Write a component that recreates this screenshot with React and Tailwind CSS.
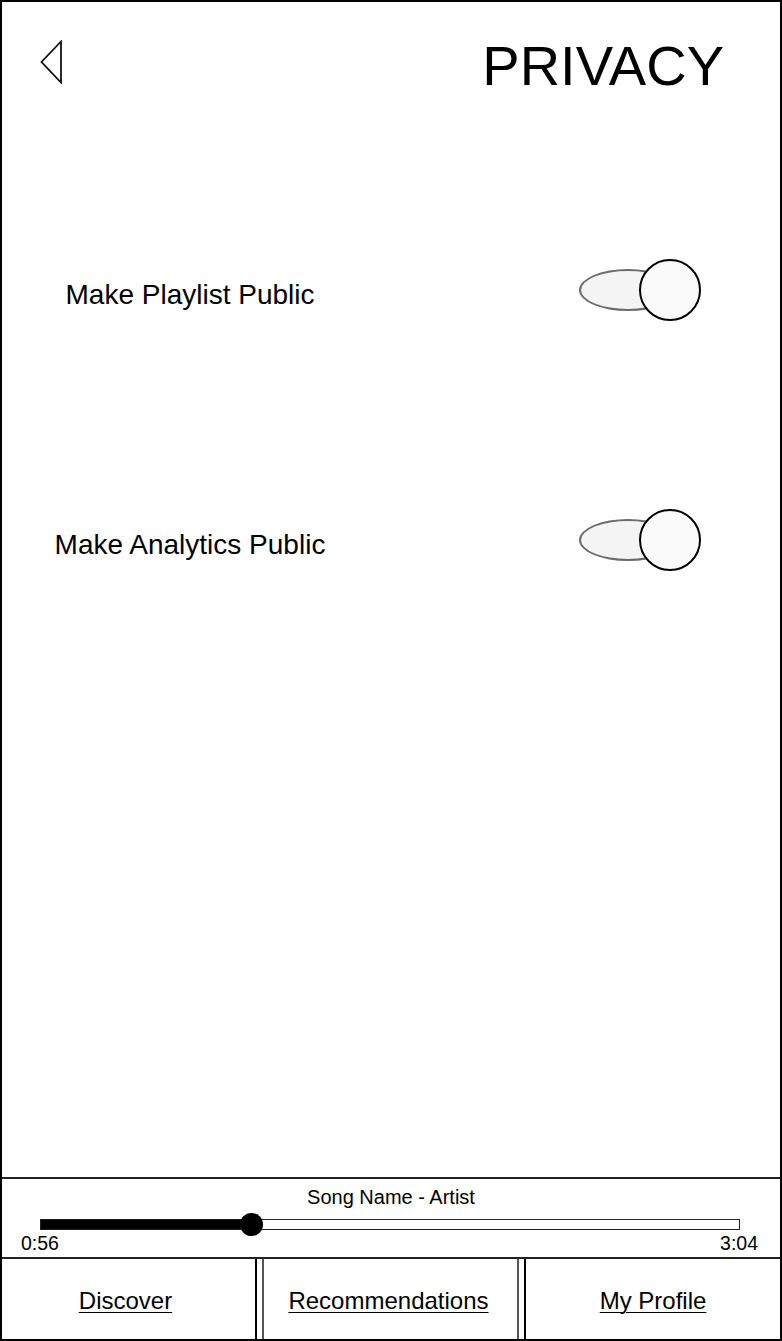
import { useState } from 'react'

function Toggle({ on, onChange }) {
  return (
    <button onClick={onChange} className="relative w-[122px] h-[62px] shrink-0">
      <span className="absolute left-0 top-[10px] w-[98px] h-[42px] rounded-[50%] border-2 border-[#6b6b6b] bg-[#f4f4f4]" />
      <span className="absolute right-0 top-0 w-[62px] h-[62px] rounded-full border-2 border-black bg-[#fafafa]" />
    </button>
  )
}

function SettingRow({ label, on, onChange }) {
  return (
    <div className="flex items-center h-[62px]">
      <div className="w-[376px] text-center text-[28px] leading-none pt-[10px]">{label}</div>
      <div className="flex-1" />
      <Toggle on={on} onChange={onChange} />
    </div>
  )
}

export default function App() {
  const [playlistPublic, setPlaylistPublic] = useState(true)
  const [analyticsPublic, setAnalyticsPublic] = useState(true)

  return (
    <div
      className="w-[782px] h-[1341px] border-2 border-black bg-white text-black flex flex-col"
      style={{ fontFamily: '"Liberation Sans", Arial, sans-serif' }}
    >
      {/* header */}
      <div className="flex items-start justify-between pl-[38px] pr-[56px] pt-[36px]">
        <button className="mt-[2px]">
          <svg width="24" height="44" viewBox="0 0 24 44">
            <path d="M21 1.5 L1.5 22 L21 42.5 Z" fill="none" stroke="#111" strokeWidth="1.8" strokeLinejoin="miter" />
          </svg>
        </button>
        <h1 className="text-[56px] leading-none font-normal">PRIVACY</h1>
      </div>

      {/* settings */}
      <div className="flex-1 flex flex-col gap-[188px] pt-[165px] pr-[79px]">
        <SettingRow label="Make Playlist Public" on={playlistPublic} onChange={() => setPlaylistPublic(v => !v)} />
        <SettingRow label="Make Analytics Public" on={analyticsPublic} onChange={() => setAnalyticsPublic(v => !v)} />
      </div>

      {/* player */}
      <div className="h-[80px] border-t-2 border-[#222] flex flex-col">
        <div className="text-center text-[20px] leading-[22px] pt-[7px]">Song Name - Artist</div>
        <div className="relative ml-[38px] mr-[40px] mt-[11px] h-[11px] border-[1.5px] border-[#222] bg-white">
          <div className="h-full w-[210px] bg-black" />
          <div className="absolute left-[199px] top-[-7px] w-[23px] h-[23px] rounded-full bg-black" />
        </div>
        <div className="flex justify-between pl-[19px] pr-[22px] mt-[2px] text-[19.5px] leading-[22px]">
          <span>0:56</span>
          <span>3:04</span>
        </div>
      </div>

      {/* nav */}
      <div className="h-[82px] border-t-2 border-[#222] flex gap-[5px]">
        <a href="#" className="w-[255px] shrink-0 border-r-2 border-black flex items-center justify-center text-[24px] underline underline-offset-[3px] decoration-1 pt-[3px] pr-[6px]">Discover</a>
        <a href="#" className="w-[257px] shrink-0 border-x-2 border-[#555] flex items-center justify-center text-[24px] underline underline-offset-[3px] decoration-1 pt-[3px] pr-[4px]">Recommendations</a>
        <a href="#" className="flex-1 border-l-2 border-black flex items-center justify-center text-[24px] underline underline-offset-[3px] decoration-1 pt-[3px]">My Profile</a>
      </div>
    </div>
  )
}
